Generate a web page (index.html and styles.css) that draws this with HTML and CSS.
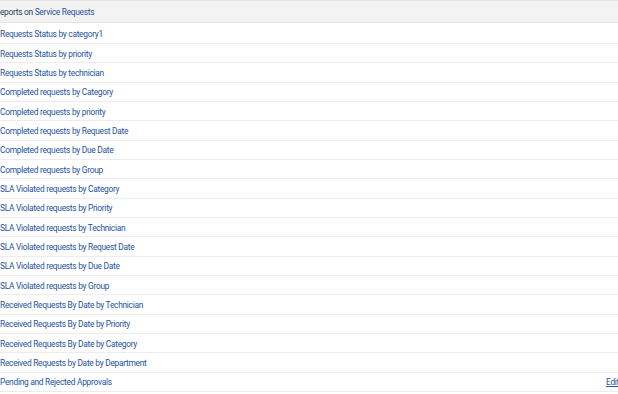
FILE: index.html
```html
<!DOCTYPE html>
<html>
<head>
<meta charset="utf-8">
<link rel="stylesheet" href="styles.css">
</head>
<body>
<div class="panel">
  <div class="panel-head"><span class="head-text">Reports on <a class="link">Service Requests</a></span></div>
  <ul class="report-list">
    <li class="row"><a class="link">Requests Status by category1</a></li>
    <li class="row"><a class="link">Requests Status by priority</a></li>
    <li class="row"><a class="link">Requests Status by technician</a></li>
    <li class="row"><a class="link">Completed requests by Category</a></li>
    <li class="row"><a class="link">Completed requests by priority</a></li>
    <li class="row"><a class="link">Completed requests by Request Date</a></li>
    <li class="row"><a class="link">Completed requests by Due Date</a></li>
    <li class="row"><a class="link">Completed requests by Group</a></li>
    <li class="row"><a class="link">SLA Violated requests by Category</a></li>
    <li class="row"><a class="link">SLA Violated requests by Priority</a></li>
    <li class="row"><a class="link">SLA Violated requests by Technician</a></li>
    <li class="row"><a class="link">SLA Violated requests by Request Date</a></li>
    <li class="row"><a class="link">SLA Violated requests by Due Date</a></li>
    <li class="row"><a class="link">SLA Violated requests by Group</a></li>
    <li class="row"><a class="link">Received Requests By Date by Technician</a></li>
    <li class="row"><a class="link">Received Requests By Date by Priority</a></li>
    <li class="row"><a class="link">Received Requests By Date by Category</a></li>
    <li class="row"><a class="link">Received Requests by Date by Department</a></li>
    <li class="row"><span class="link">Pending and Rejected Approvals</span><a class="edit">Edit</a></li>
  </ul>
</div>
</body>
</html>
```
FILE: styles.css
```css
html, body {
  margin: 0;
  padding: 0;
  overflow: hidden;
  background: #ffffff;
}
body {
  font-family: Roboto, "Liberation Sans", sans-serif;
  font-size: 8.4px;
  letter-spacing: -0.28px;
  color: #333333;
}
.panel {
  width: 630px;
}
.panel-head {
  height: 21px;
  background: #f3f3f3;
  border-top: 1px solid #e3e3e3;
  border-bottom: 1px solid #e3e3e3;
  display: flex;
  align-items: center;
  overflow: hidden;
}
.head-text {
  margin-left: -5px;
  white-space: nowrap;
  color: #2b3a55;
}
.link {
  color: #2552a0;
  text-decoration: none;
}
.report-list {
  list-style: none;
  margin: 0;
  padding: 0;
}
.row {
  box-sizing: border-box;
  height: 19.33px;
  padding-top: 1px;
  border-bottom: 1px solid #ececec;
  display: flex;
  align-items: center;
  justify-content: space-between;
  white-space: nowrap;
}
.row:first-child {
  height: 21px;
  padding-top: 2px;
}
.edit {
  color: #2552a0;
  text-decoration: underline;
  margin-right: 0;
  width: 24px;
}
```
